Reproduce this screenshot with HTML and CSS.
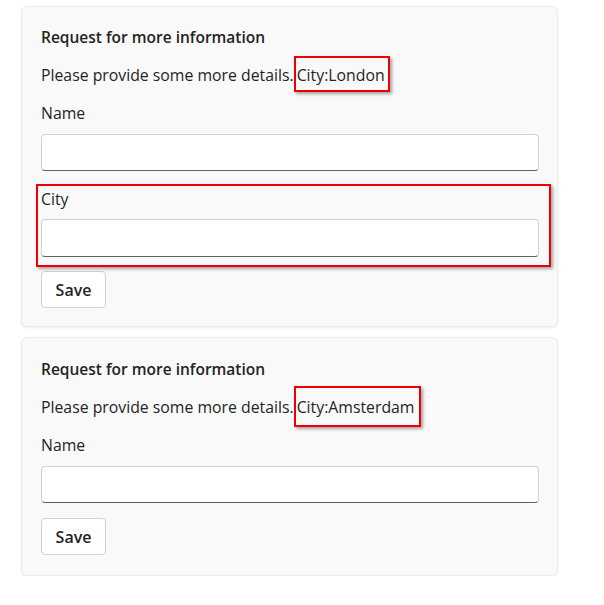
FILE: index.html
```html
<!DOCTYPE html>
<html>
<head>
<meta charset="utf-8">
<link rel="stylesheet" href="styles.css">
</head>
<body>
<div class="feed">
  <div class="card">
    <div class="title">Request for more information</div>
    <div class="para">Please provide some more details. <span class="mark mark-london">City:London</span></div>
    <div class="field">
      <div class="label">Name</div>
      <div class="input"></div>
    </div>
    <div class="field field-marked">
      <div class="label">City</div>
      <div class="input"></div>
    </div>
    <button class="btn">Save</button>
  </div>
  <div class="card card-second">
    <div class="title">Request for more information</div>
    <div class="para">Please provide some more details. <span class="mark mark-ams">City:Amsterdam</span></div>
    <div class="field">
      <div class="label">Name</div>
      <div class="input"></div>
    </div>
    <button class="btn">Save</button>
  </div>
</div>
</body>
</html>
```
FILE: styles.css
```css
html, body {
  margin: 0;
  padding: 0;
  background: #ffffff;
}
body {
  font-family: "Open Sans", "Noto Sans", sans-serif;
  font-size: 15.8px;
  line-height: 20px;
  color: #242424;
}
.feed {
  display: flex;
  flex-direction: column;
  gap: 10px;
  padding: 6px 0 0 21px;
}
.card {
  width: 537px;
  box-sizing: border-box;
  background: #f9f9f9;
  border: 1px solid #ececec;
  border-radius: 6px;
  box-shadow: 0 1px 2px rgba(0,0,0,0.08);
  padding: 20px 18px 18px 19px;
  display: flex;
  flex-direction: column;
  align-items: flex-start;
}
.card-second {
  padding-top: 21px;
  padding-bottom: 20px;
}
.title {
  font-weight: 600;
  font-size: 15.5px;
}
.para {
  margin-top: 18px;
  white-space: nowrap;
}
.mark {
  border: 2px solid #ee0000;
  padding: 6px 3px 4px 1px;
  box-shadow: 2px 2px 3px rgba(0,0,0,0.35);
  margin-left: -4px;
}
.mark-ams {
  padding: 8px 5px 7px 1px;
}
.field {
  margin-top: 18px;
  align-self: stretch;
  display: flex;
  flex-direction: column;
  position: relative;
}
.label {
  margin-bottom: 11px;
}
.input {
  height: 37px;
  box-sizing: border-box;
  background: #ffffff;
  border: 1px solid #d1d1d1;
  border-bottom-color: #616161;
  border-radius: 4px;
}
.field-marked .label {
  margin-bottom: 10px;
}
.field-marked .input {
  height: 38px;
}
.field-marked::after {
  content: "";
  position: absolute;
  top: -5px;
  left: -5px;
  right: -12px;
  bottom: -10px;
  border: 2px solid #ee0000;
  box-shadow: 2px 2px 3px rgba(0,0,0,0.35);
  pointer-events: none;
}
.btn {
  margin-top: 14px;
  width: 65px;
  height: 37px;
  background: #ffffff;
  border: 1px solid #d1d1d1;
  border-radius: 4px;
  font-family: inherit;
  font-size: 16px;
  font-weight: 600;
  color: #242424;
  padding: 0;
}
.card-second .btn {
  margin-top: 15px;
}
```
